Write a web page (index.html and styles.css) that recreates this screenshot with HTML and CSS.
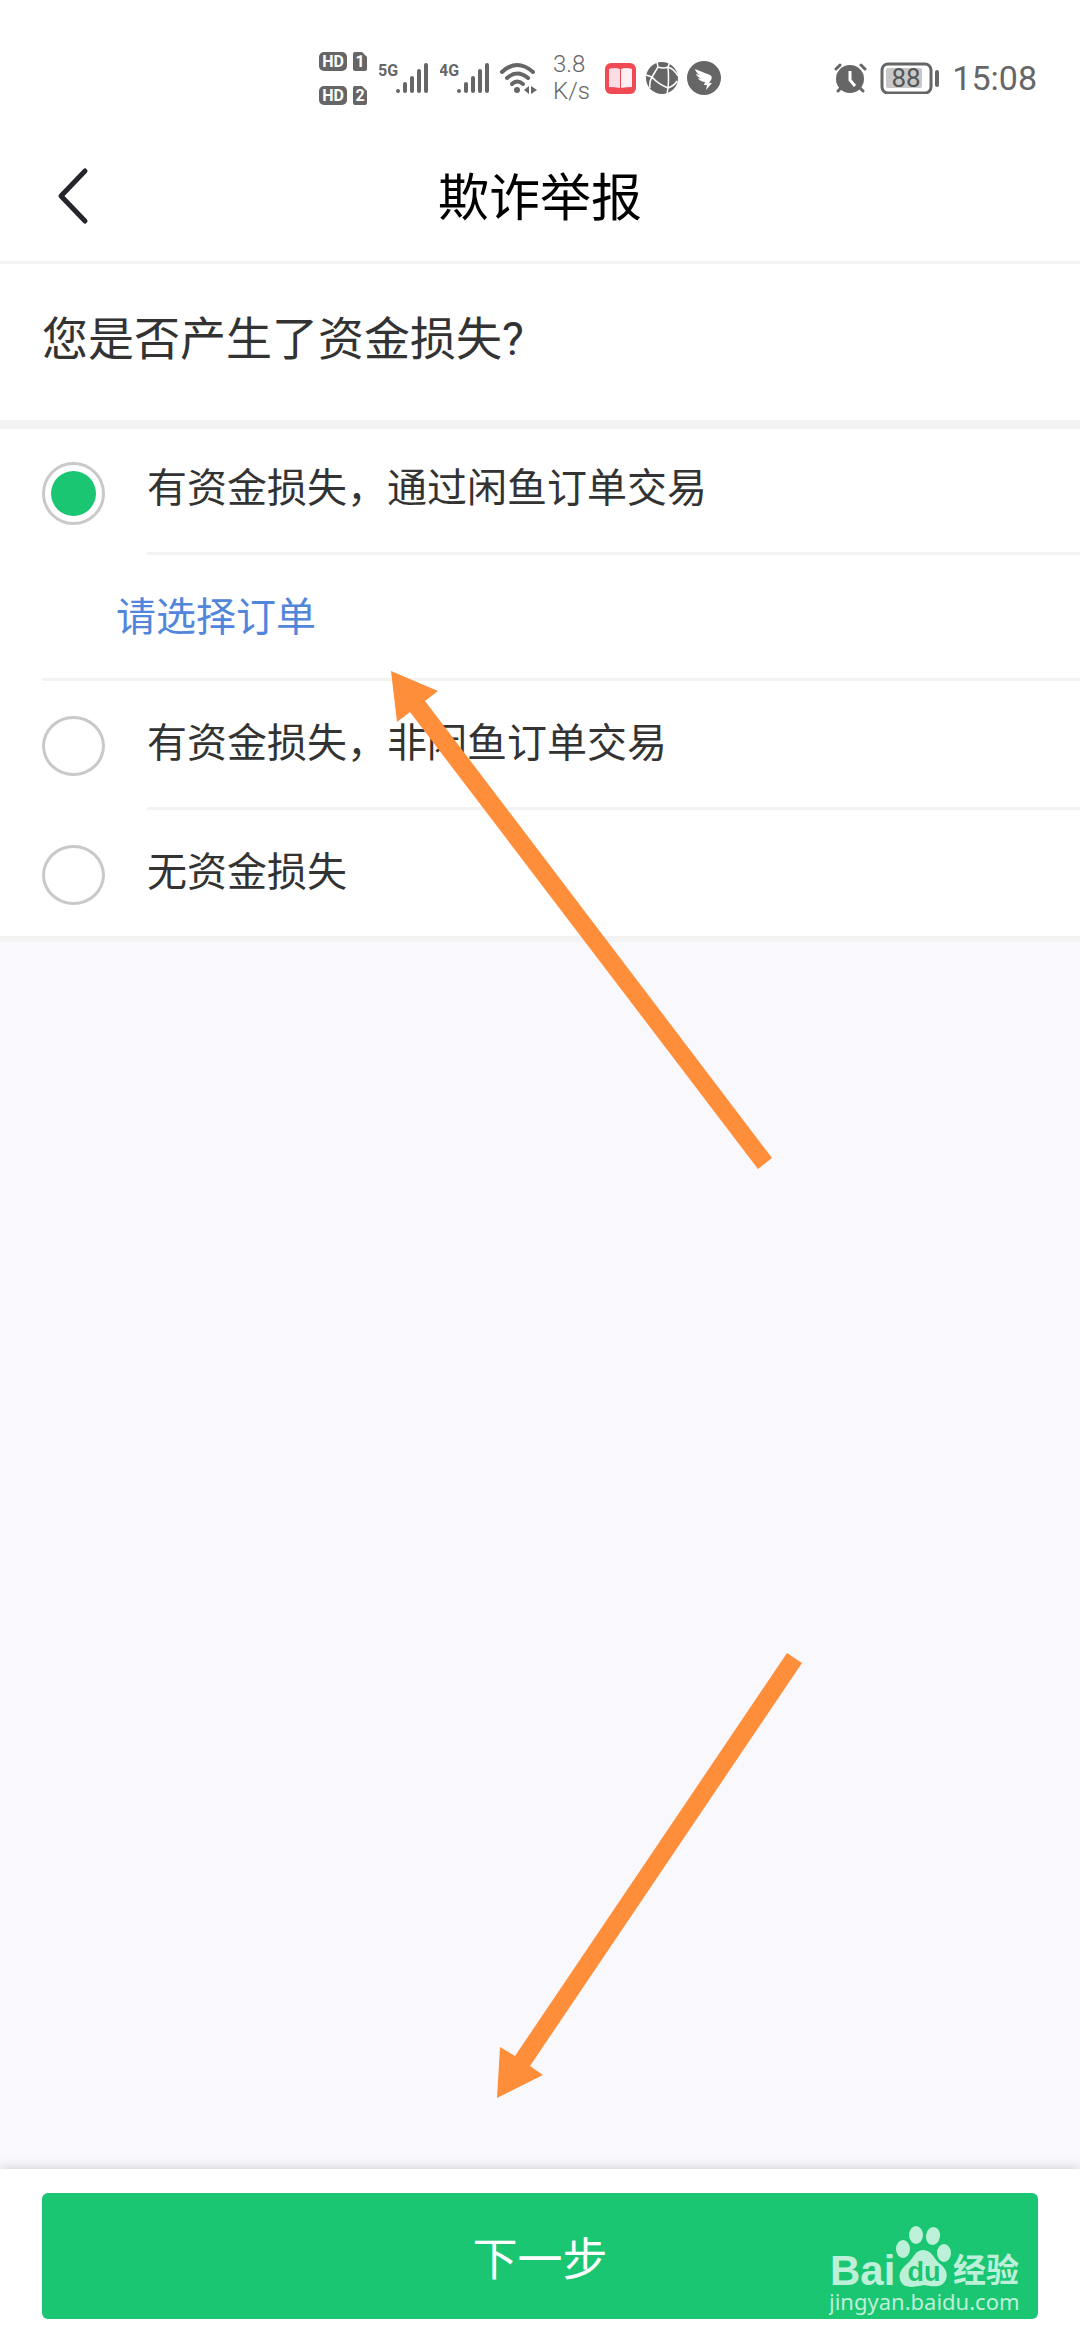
FILE: index.html
```html
<!DOCTYPE html>
<html lang="zh-CN">
<head>
  <meta charset="UTF-8">
  <meta name="viewport" content="width=device-width, initial-scale=1">
  <title>欺诈举报</title>
  <link rel="stylesheet" href="styles.css">
</head>
<body>

  <div class="status-bar">
    <svg class="icon-sim" width="50" height="56" viewBox="0 0 50 56">
      <g fill="#666">
        <rect x="0" y="2" width="28" height="19" rx="5"/>
        <path d="M36 2h7l5 5v12q0 2-2 2H36q-2 0-2-2V4q0-2 2-2z"/>
        <rect x="0" y="36" width="28" height="19" rx="5"/>
        <path d="M36 36h7l5 5v12q0 2-2 2H36q-2 0-2-2V38q0-2 2-2z"/>
      </g>
      <g class="badge-text" fill="#fff" text-anchor="middle">
        <text x="14" y="17">HD</text>
        <text x="41" y="17">1</text>
        <text x="14" y="51">HD</text>
        <text x="41" y="51">2</text>
      </g>
    </svg>
    <svg class="icon-signal" width="50" height="32" viewBox="0 0 50 32">
      <text class="net-text" x="-1" y="14" fill="#666">5G</text>
      <path d="M19 29v0M26 22v7M33 16v13M40 9v20M47 3v26" stroke="#666" stroke-width="4" stroke-linecap="round"/>
    </svg>
    <svg class="icon-signal" width="50" height="32" viewBox="0 0 50 32">
      <text class="net-text" x="-1" y="14" fill="#666">4G</text>
      <path d="M19 29v0M26 22v7M33 16v13M40 9v20M47 3v26" stroke="#666" stroke-width="4" stroke-linecap="round"/>
    </svg>
    <svg class="icon-wifi" width="40" height="32" viewBox="0 0 40 32">
      <g fill="none" stroke="#666" stroke-width="4" stroke-linecap="round">
        <path d="M3 10Q18 -4 34 10"/>
        <path d="M8 16Q18 7 29 16"/>
        <path d="M13 22Q18 17 24 22"/>
      </g>
      <circle cx="18" cy="28" r="3" fill="#666"/>
      <path d="M30 24v8l-5-4zM32 24v8l6-4z" fill="#666"/>
    </svg>
    <div class="net-speed">3.8<br>K/s</div>
    <svg class="icon-book" width="31" height="31" viewBox="0 0 31 31">
      <rect width="31" height="31" rx="6" fill="#f04b55"/>
      <path d="M4 6q6-2 11 0v19q-5-1-11-1z" fill="#fbdde4"/>
      <path d="M16 6q5-2 11 0v18q-6 0-11 1z" fill="#fdeff3"/>
    </svg>
    <svg class="icon-globe" width="32" height="32" viewBox="0 0 32 32">
      <circle cx="16" cy="16" r="16" fill="#666"/>
      <path d="M11 0L12 5L6 15L0 13M12 5Q17 7 22 5L24 0M6 15Q12 22 22 26L21 32M6 15Q3 20 4 26M22 5Q23 16 22 26Q28 24 31 19M22 5Q28 7 32 14" fill="none" stroke="#fff" stroke-width="1.5"/>
    </svg>
    <svg class="icon-bird" width="34" height="34" viewBox="0 0 34 34">
      <circle cx="17" cy="17" r="17" fill="#666"/>
      <path d="M8 8l15 6q3 2 1 5l-2 3h3l-6 7 1-5h-3l1-3q-6-1-7-4l4 1q-5-2-6-5l4 1q-4-2-5-6z" fill="#fff"/>
    </svg>
    <span class="spacer"></span>
    <svg class="icon-alarm" width="33" height="32" viewBox="0 0 33 32">
      <path d="M2 7l4-4M31 7l-4-4M8 25l-4 4M25 25l4 4" stroke="#666" stroke-width="3" stroke-linecap="round"/>
      <circle cx="16" cy="17" r="14" fill="#666"/>
      <path d="M16 9v9l5 6" fill="none" stroke="#fff" stroke-width="3"/>
    </svg>
    <svg class="icon-battery" width="60" height="32" viewBox="0 0 60 32">
      <rect x="2" y="2" width="49" height="29" rx="6" fill="none" stroke="#666" stroke-width="3"/>
      <rect x="6" y="6" width="36" height="20" rx="2" fill="#c8c8c8"/>
      <rect x="55" y="8" width="4" height="17" rx="2" fill="#666"/>
      <text class="battery-text" x="26" y="25" text-anchor="middle" fill="#555">88</text>
    </svg>
    <span class="clock">15:08</span>
  </div>

  <header class="nav">
    <button class="back" type="button" aria-label="返回">
      <svg width="32" height="58" viewBox="0 0 32 58">
        <path d="M28 4L4 29L28 54" fill="none" stroke="#25262b" stroke-width="5" stroke-linecap="round" stroke-linejoin="round"/>
      </svg>
    </button>
    <h1>欺诈举报</h1>
  </header>

  <main>
    <h2 class="question">您是否产生了资金损失?</h2>

    <form class="options" id="report">
      <div class="option">
        <input type="radio" name="loss" id="loss-order" checked>
        <label for="loss-order">有资金损失，通过闲鱼订单交易</label>
      </div>
      <div class="order-row">
        <a href="#order">请选择订单</a>
      </div>
      <div class="option">
        <input type="radio" name="loss" id="loss-other">
        <label for="loss-other">有资金损失，非闲鱼订单交易</label>
      </div>
      <div class="option">
        <input type="radio" name="loss" id="loss-none">
        <label for="loss-none">无资金损失</label>
      </div>
    </form>
  </main>

  <footer>
    <button class="next" type="submit" form="report">下一步</button>
    <svg class="watermark" width="196" height="96" viewBox="0 0 196 96">
      <g fill="#bdf0d8">
        <text class="wm-bai" x="1" y="60">Bai</text>
        <ellipse cx="74" cy="24" rx="7" ry="9"/>
        <ellipse cx="87" cy="10" rx="7" ry="9"/>
        <ellipse cx="104" cy="11" rx="7" ry="9" transform="rotate(10 104 11)"/>
        <ellipse cx="115" cy="28" rx="7" ry="9"/>
        <path d="M94 25C103 25 105 34 110 38C117 43 119 49 117 54C114 63 105 62 95 60C85 62 76 64 72 57C68 49 73 43 79 38C84 34 86 25 94 25Z"/>
        <text class="wm-name" x="124" y="57">经验</text>
        <text class="wm-url" x="0" y="85">jingyan.baidu.com</text>
      </g>
      <text class="wm-du" x="95" y="56" text-anchor="middle" fill="#1bc672">du</text>
    </svg>
  </footer>

  <svg class="arrows" viewBox="0 0 1080 2340" aria-hidden="true">
    <polygon points="391,671 438,691 425,701 772,1158 758,1169 410,712 397,722"/>
    <polygon points="497,2098 500,2047 515,2056 787,1653 802,1663 530,2066 543,2075"/>
  </svg>

</body>
</html>
```
FILE: styles.css
```css
* {
  box-sizing: border-box;
}
body {
  position: relative;
  display: flex;
  flex-direction: column;
  min-height: 100vh;
  margin: 0;
  background-color: #f9f8fd;
  color: #333;
  font-family: Roboto, "Noto Sans CJK SC", sans-serif;
  font-size: 40px;
}
h1, h2 {
  margin: 0;
  font-weight: 400;
}
button {
  border: 0;
  font-family: inherit;
}

/* status bar */
.status-bar {
  display: flex;
  align-items: center;
  height: 132px;
  padding: 24px 43px 0 319px;
  background: #fff;
  color: #666;
}
.icon-sim {
  margin-right: 10px;
}
.icon-signal {
  margin-right: 11px;
}
.icon-wifi {
  margin: 0 14px 0 -2px;
}
.net-speed {
  width: 52px;
  font-size: 24px;
  font-weight: 300;
  line-height: 27px;
}
.icon-book {
  margin-right: 10px;
}
.icon-globe {
  margin-right: 9px;
}
.spacer {
  flex: 1;
}
.icon-alarm {
  margin-right: 13px;
}
.icon-battery {
  margin-right: 12px;
}
.clock {
  font-size: 34px;
}
.badge-text {
  font-size: 16px;
  font-weight: 700;
}
.net-text {
  font-size: 16px;
  font-weight: 700;
}
.battery-text {
  font-size: 26px;
}

/* title bar */
.nav {
  display: grid;
  grid-template-columns: 120px 1fr 120px;
  align-items: center;
  height: 132px;
  border-bottom: 3px solid #f3f3f3;
  background: #fff;
}
.nav h1 {
  padding-top: 4px;
  color: #000;
  font-size: 51px;
  line-height: 72px;
  text-align: center;
}
.back {
  padding: 0 0 2px 57px;
  background: none;
  text-align: left;
}
.back svg {
  display: block;
}

/* question and answers */
main {
  flex: 1;
}
.question {
  padding: 42px 42px 48px;
  border-bottom: 9px solid #f3f3f3;
  background: #fff;
  font-size: 46px;
  line-height: 66px;
}
.options {
  border-bottom: 6px solid #f3f3f3;
  background: #fff;
}
.option {
  display: flex;
  align-items: flex-start;
  gap: 42px;
  padding-left: 42px;
}
.option input {
  appearance: none;
  flex: none;
  width: 63px;
  height: 60px;
  margin: 35px 0 0;
  padding: 6px;
  border: 3px solid #c9c9c9;
  border-radius: 50%;
}
.option input:checked {
  height: 63px;
  margin-top: 33px;
  background: #1bc672 content-box;
}
.option label {
  flex: 1;
  padding: 36px 0;
  border-bottom: 3px solid #f3f3f3;
  line-height: 54px;
}
.option:first-child label {
  padding-top: 33px;
}
.option:last-child label {
  border-bottom: 0;
}
.order-row {
  margin-left: 42px;
  padding: 36px 74px 33px;
  border-bottom: 3px solid #f3f3f3;
  line-height: 54px;
}
.order-row a {
  color: #5186db;
  text-decoration: none;
}

/* bottom bar */
footer {
  position: relative;
  padding: 24px 42px 21px;
  background: #fff;
  box-shadow: 0 0 12px rgba(0, 0, 0, 0.2);
}
.next {
  display: block;
  width: 100%;
  height: 126px;
  border-radius: 6px;
  background: #1bc672;
  color: #fff;
  font-size: 45px;
}
.watermark {
  position: absolute;
  right: 55px;
  bottom: 19px;
  pointer-events: none;
}
.wm-bai {
  font-family: "Liberation Sans", sans-serif;
  font-size: 42px;
  font-weight: 700;
}
.wm-du {
  font-family: "Liberation Sans", sans-serif;
  font-size: 27px;
  font-weight: 700;
}
.wm-name {
  font-size: 33px;
  font-weight: 700;
}
.wm-url {
  font-family: "Noto Sans", sans-serif;
  font-size: 22px;
}

/* pointer arrows over the page */
.arrows {
  position: absolute;
  top: 0;
  left: 0;
  width: 100%;
  fill: #ff8e3b;
  pointer-events: none;
}
```
